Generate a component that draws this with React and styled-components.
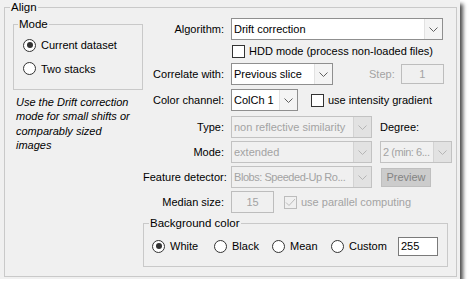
import React from 'react';
import styled, { createGlobalStyle } from 'styled-components';

const Global = createGlobalStyle`
  html, body {
    margin: 0;
    padding: 0;
    background: #fff;
  }
  body {
    font-family: "Liberation Sans", Arial, sans-serif;
    font-size: 11px;
    color: #000;
  }
`;

const Window = styled.div`
  box-sizing: border-box;
  width: 460px;
  height: 279px;
  padding: 1px 0 0 4px;
  background: #f0f0f0;
  box-shadow: 3px 4px 4px rgba(0, 0, 0, 0.7);
`;

const Group = styled.fieldset`
  box-sizing: border-box;
  margin: 0;
  padding: 0;
  min-width: 0;
  border: 1px solid #c9c9c9;
  border-radius: 0;
  width: ${p => p.$w ? p.$w + 'px' : 'auto'};
  height: ${p => p.$h ? p.$h + 'px' : 'auto'};
  margin-top: ${p => p.$mt || 0}px;
`;

const Title = styled.legend`
  margin-left: ${p => p.$ml || 5}px;
  padding: 0 1px;
  font-size: 11.5px;
  line-height: 13px;
`;

const Columns = styled.div`
  display: flex;
  padding: 4px 0 0 8px;
`;

const LeftCol = styled.div`
  width: 130px;
  flex-shrink: 0;
`;

const RightCol = styled.div`
  display: flex;
  flex-direction: column;
  flex: 1;
`;

const ModeBody = styled.div`
  display: flex;
  flex-direction: column;
  gap: 1.5px;
  padding: 3px 0 9px 9px;
`;

const RadioLabel = styled.label`
  display: flex;
  align-items: center;
  gap: 5px;
  height: 22px;
  font-size: 11px;
`;

const RadioCircle = styled.span`
  position: relative;
  box-sizing: border-box;
  width: 13px;
  height: 13px;
  border-radius: 50%;
  border: 1px solid #333;
  background: #fff;
  flex-shrink: 0;

  &::after {
    content: '';
    display: ${p => p.$on ? 'block' : 'none'};
    position: absolute;
    left: 50%;
    top: 50%;
    width: 6px;
    height: 6px;
    border-radius: 50%;
    background: #333;
    transform: translate(-50%, -50%);
  }
`;

const Hint = styled.p`
  width: 120px;
  margin: 5px 0 0 3px;
  font-style: italic;
  line-height: 14.5px;
`;

const Row = styled.div`
  display: flex;
  align-items: center;
  height: 22px;
  margin-top: ${p => p.$mt || 0}px;
`;

const Label = styled.span`
  width: 81px;
  margin-right: 7px;
  flex-shrink: 0;
  text-align: right;
  white-space: nowrap;
  color: ${p => p.$off ? '#a3a3a3' : '#000'};
`;

const Text = styled.span`
  white-space: nowrap;
  margin-left: ${p => p.$ml || 0}px;
  color: ${p => p.$off ? '#a3a3a3' : '#000'};
`;

const ComboBox = styled.div`
  box-sizing: border-box;
  display: flex;
  align-items: stretch;
  width: ${p => p.$w}px;
  height: 22px;
  margin-left: ${p => p.$ml || 0}px;
  border: 1px solid ${p => p.$off ? '#c2c2c2' : '#8f8f8f'};
  background: ${p => p.$off ? '#f0f0f0' : '#fff'};
  flex-shrink: 0;
`;

const ComboValue = styled.span`
  flex: 1;
  display: flex;
  align-items: center;
  padding-left: 2px;
  overflow: hidden;
  white-space: nowrap;
  letter-spacing: ${p => p.$tight ? '-0.45px' : 'normal'};
  color: ${p => p.$off ? '#a3a3a3' : '#000'};
`;

const ComboArrow = styled.span`
  width: 17px;
  display: flex;
  align-items: center;
  justify-content: center;
  flex-shrink: 0;
  background: ${p => p.$off ? '#e2e2e2' : '#f4f4f4'};
  border-left: 1px solid ${p => p.$off ? '#d3d3d3' : '#e2e2e2'};
`;

const Field = styled.div`
  box-sizing: border-box;
  display: flex;
  align-items: center;
  justify-content: ${p => p.$left ? 'flex-start' : 'center'};
  width: ${p => p.$w}px;
  height: ${p => p.$h || 20}px;
  margin-left: ${p => p.$ml || 0}px;
  padding-left: ${p => p.$left ? 2 : 0}px;
  border: 1px solid ${p => p.$off ? '#bdbdbd' : '#7a7a7a'};
  background: ${p => p.$off ? '#f0f0f0' : '#fff'};
  color: ${p => p.$off ? '#a3a3a3' : '#000'};
  flex-shrink: 0;
`;

const Check = styled.span`
  box-sizing: border-box;
  display: flex;
  align-items: center;
  justify-content: center;
  width: 13px;
  height: 13px;
  margin-left: ${p => p.$ml || 0}px;
  margin-right: 4px;
  border: 1px solid ${p => p.$off ? '#bcbcbc' : '#333'};
  background: ${p => p.$off ? '#f0f0f0' : '#fff'};
  flex-shrink: 0;
`;

const Button = styled.div`
  box-sizing: border-box;
  display: flex;
  align-items: center;
  justify-content: center;
  width: 50px;
  height: 19px;
  margin-left: 9px;
  border: 1px solid #bfbfbf;
  background: #cccccc;
  color: #838383;
`;

const BgBody = styled.div`
  display: grid;
  grid-template-columns: 62px 58px 59px 67px 40px;
  align-items: center;
  height: 22px;
  padding: 5px 0 9px 8px;
`;

function Chevron({ off }) {
  return (
    <svg width="9" height="5" viewBox="0 0 9 5">
      <polyline points="0.5,0.5 4.5,4.5 8.5,0.5" fill="none" stroke={off ? '#b5b5b5' : '#606060'} strokeWidth="1" />
    </svg>
  );
}

function Combo({ w, ml, off, tight, children }) {
  return (
    <ComboBox $w={w} $ml={ml} $off={off}>
      <ComboValue $off={off} $tight={tight}>{children}</ComboValue>
      <ComboArrow $off={off}><Chevron off={off} /></ComboArrow>
    </ComboBox>
  );
}

function Radio({ on, children }) {
  return (
    <RadioLabel>
      <RadioCircle $on={on} />
      {children}
    </RadioLabel>
  );
}

export default function App() {
  return (
    <>
      <Global />
      <Window>
        <Group $h={276} $w={453}>
          <Title $ml={5}>Align</Title>
          <Columns>
            <LeftCol>
              <Group>
                <Title $ml={4}>Mode</Title>
                <ModeBody>
                  <Radio on>Current dataset</Radio>
                  <Radio>Two stacks</Radio>
                </ModeBody>
              </Group>
              <Hint>
                Use the Drift correction mode for small shifts or comparably sized images
              </Hint>
            </LeftCol>

            <RightCol>
              <Row>
                <Label>Algorithm:</Label>
                <Combo w={212}>Drift correction</Combo>
              </Row>
              <Row>
                <Label />
                <Check $ml={1} />
                <Text>HDD mode (process non-loaded files)</Text>
              </Row>
              <Row $mt={1}>
                <Label>Correlate with:</Label>
                <Combo w={102}>Previous slice</Combo>
                <Text $off $ml={36}>Step:</Text>
                <Field $off $w={43} $ml={6}>1</Field>
              </Row>
              <Row $mt={4}>
                <Label>Color channel:</Label>
                <Combo w={67}>ColCh 1</Combo>
                <Check $ml={13} />
                <Text>use intensity gradient</Text>
              </Row>
              <Row $mt={5}>
                <Label>Type:</Label>
                <Combo w={141} off>non reflective similarity</Combo>
                <Text $ml={8}>Degree:</Text>
              </Row>
              <Row $mt={3}>
                <Label>Mode:</Label>
                <Combo w={141} off>extended</Combo>
                <Combo w={72} ml={8} off tight>2 (min: 6...</Combo>
              </Row>
              <Row $mt={3}>
                <Label>Feature detector:</Label>
                <Combo w={141} off tight>Blobs: Speeded-Up Ro...</Combo>
                <Button>Preview</Button>
              </Row>
              <Row $mt={3}>
                <Label>Median size:</Label>
                <Field $off $w={43} $h={22}>15</Field>
                <Check $off $ml={10}>
                  <svg width="11" height="9" viewBox="0 0 11 9">
                    <polyline points="1,4.5 4,7.5 10,1" fill="none" stroke="#bcbcbc" strokeWidth="1" />
                  </svg>
                </Check>
                <Text $off>use parallel computing</Text>
              </Row>

              <Group $w={305} $mt={4}>
                <Title $ml={5}>Background color</Title>
                <BgBody>
                  <Radio on>White</Radio>
                  <Radio>Black</Radio>
                  <Radio>Mean</Radio>
                  <Radio>Custom</Radio>
                  <Field $w={40} $h={19} $left>255</Field>
                </BgBody>
              </Group>
            </RightCol>
          </Columns>
        </Group>
      </Window>
    </>
  );
}
